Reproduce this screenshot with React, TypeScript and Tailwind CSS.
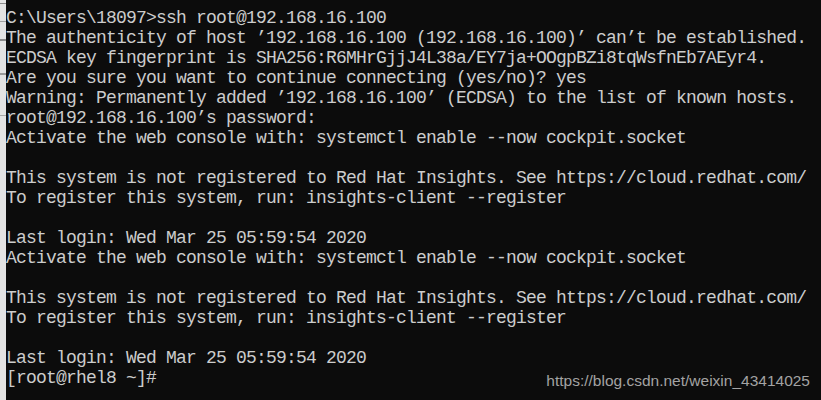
import React from "react";

const lines = [
  "C:\\Users\\18097>ssh root@192.168.16.100",
  "The authenticity of host ’192.168.16.100 (192.168.16.100)’ can’t be established.",
  "ECDSA key fingerprint is SHA256:R6MHrGjjJ4L38a/EY7ja+OOgpBZi8tqWsfnEb7AEyr4.",
  "Are you sure you want to continue connecting (yes/no)? yes",
  "Warning: Permanently added ’192.168.16.100’ (ECDSA) to the list of known hosts.",
  "root@192.168.16.100’s password:",
  "Activate the web console with: systemctl enable --now cockpit.socket",
  "",
  "This system is not registered to Red Hat Insights. See https://cloud.redhat.com/",
  "To register this system, run: insights-client --register",
  "",
  "Last login: Wed Mar 25 05:59:54 2020",
  "Activate the web console with: systemctl enable --now cockpit.socket",
  "",
  "This system is not registered to Red Hat Insights. See https://cloud.redhat.com/",
  "To register this system, run: insights-client --register",
  "",
  "Last login: Wed Mar 25 05:59:54 2020",
  "[root@rhel8 ~]#",
];

export default function App() {
  return (
    <div className="relative flex w-[821px] h-[400px] overflow-hidden bg-[#0c0c0c]">
      {/* window peeking from behind */}
      <div className="flex flex-col w-[6px] h-full bg-[#e3e3e3]">
        <div className="h-[3px]" />
        <div className="h-[1px] bg-[#8a8a8a]" />
        <div className="h-[17px]" />
        <div className="h-[1px] bg-[#a0a0a0]" />
        <div className="h-[17px]" />
        <div className="h-[2px] bg-[#8a8a8a]" />
        <div className="h-[32px]" />
        <div className="h-[2px] bg-[#9a9a9a]" />
        <div className="h-[40px]" />
        <div className="h-[1px] bg-[#a8a8a8]" />
      </div>
      <div
        className="pt-[8px] text-[#cccccc] whitespace-pre leading-[20px] text-[18px] tracking-[-0.8px]"
        style={{ fontFamily: '"Liberation Mono", "DejaVu Sans Mono", monospace' }}
      >
        {lines.map((l, i) => (
          <div key={i} className="h-[20px]">
            {l}
          </div>
        ))}
      </div>
      <div
        className="absolute right-[11px] top-[372px] text-[15.5px] leading-[18px] text-[#a3a3a3]"
        style={{ fontFamily: '"Liberation Sans", Arial, sans-serif' }}
      >
        https://blog.csdn.net/weixin_43414025
      </div>
    </div>
  );
}
